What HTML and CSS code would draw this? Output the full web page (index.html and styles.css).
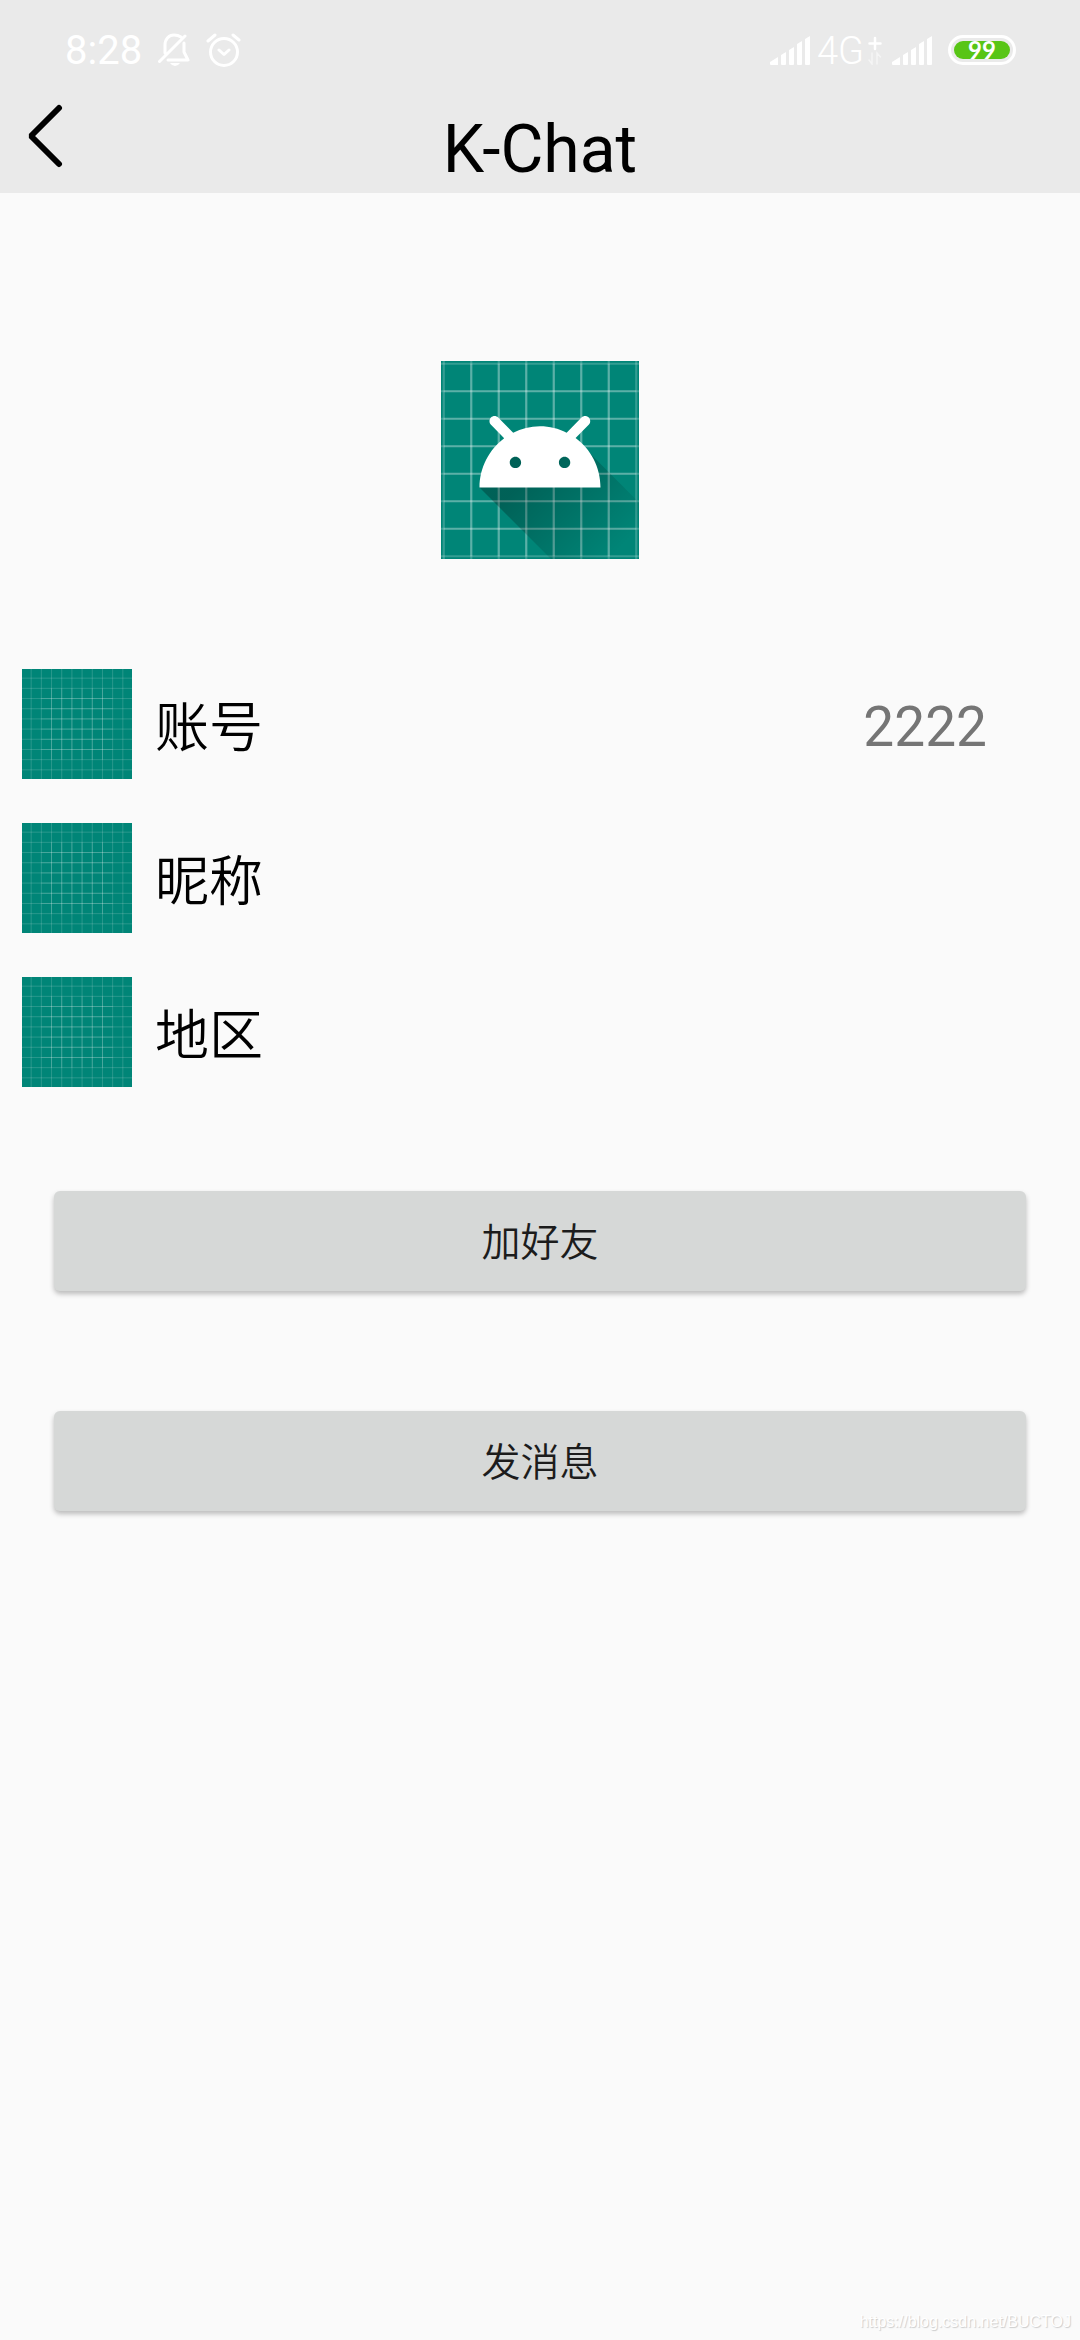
FILE: index.html
```html
<!DOCTYPE html>
<html lang="zh-CN">
<head>
<meta charset="utf-8">
<meta name="viewport" content="width=device-width, initial-scale=1">
<title>K-Chat</title>
<link rel="stylesheet" href="styles.css">
</head>
<body>
<svg class="defs" aria-hidden="true">
  <defs>
    <linearGradient id="shade" gradientUnits="userSpaceOnUse" x1="48.77" y1="61.09" x2="78.59" y2="90.92">
      <stop offset="0" stop-color="#000" stop-opacity=".267"/>
      <stop offset="1" stop-color="#000" stop-opacity="0"/>
    </linearGradient>
    <symbol id="grid" viewBox="0 0 108 108">
      <path fill="#008577" d="M0 0h108v108H0z"/>
      <path fill="none" stroke="#fff" stroke-opacity=".2" stroke-width=".8" d="M9 0v108M19 0v108M29 0v108M39 0v108M49 0v108M59 0v108M69 0v108M79 0v108M89 0v108M99 0v108"/>
      <path fill="none" stroke="#fff" stroke-opacity=".2" stroke-width=".8" d="M0 9h108M0 19h108M0 29h108M0 39h108M0 49h108M0 59h108M0 69h108M0 79h108M0 89h108M0 99h108"/>
      <path fill="none" stroke="#fff" stroke-opacity=".2" stroke-width=".8" d="M19 29h70M19 39h70M19 49h70M19 59h70M19 69h70M19 79h70"/>
      <path fill="none" stroke="#fff" stroke-opacity=".2" stroke-width=".8" d="M29 19v70M39 19v70M49 19v70M59 19v70M69 19v70M79 19v70"/>
    </symbol>
    <symbol id="signal" viewBox="0 0 40 29">
      <path fill="#fff" d="M0 28V26L8 21V29H1Q0 29 0 28ZM11 19L16 16V28Q16 29 15 29H12Q11 29 11 28ZM19 14L24 11V28Q24 29 23 29H20Q19 29 19 28ZM27 8L32 5V28Q32 29 31 29H28Q27 29 27 28ZM35 3L40 0V28Q40 29 39 29H36Q35 29 35 28Z"/>
    </symbol>
  </defs>
</svg>
<header class="header">
  <div class="status">
    <span class="time">8:28</span>
    <svg class="bell" viewBox="0 0 32 34" fill="none" stroke="#fff" stroke-width="3" stroke-linecap="round" stroke-linejoin="round">
      <path d="M7 20V12C7 6 11 2 16 2Q20 2 23 4M26 10V19L30 27H10M1.500 28.500 27 3"/>
      <path fill="#fff" stroke="none" d="M12 30H22Q20 33 17 33T12 30Z"/>
    </svg>
    <svg class="alarm" viewBox="0 0 35 34" fill="none" stroke="#fff" stroke-width="3" stroke-linecap="round" stroke-linejoin="round">
      <circle cx="18" cy="19" r="13.500"/>
      <path d="M13 17 18 21.500 23 17M2 8 9 2M27 2 33 7"/>
    </svg>
    <span class="spacer"></span>
    <svg class="signal"><use href="#signal"/></svg>
    <span class="network">4G</span>
    <svg class="data" viewBox="0 0 14 29" fill="none" stroke="#fff" stroke-linecap="round">
      <path stroke-width="2.500" d="M7 2V13M1.500 7.500H12.500"/>
      <path opacity=".5" stroke-width="1.500" d="M4 17V28L1 24M9 28V17L12.500 21"/>
    </svg>
    <svg class="signal"><use href="#signal"/></svg>
    <span class="battery"><span class="level">99</span></span>
  </div>
  <div class="titlebar">
    <button class="back" aria-label="返回">
      <svg class="chevron" viewBox="0 0 36 64"><path d="M32 4 4 32 32 60" fill="none" stroke="#000" stroke-width="6" stroke-linecap="round" stroke-linejoin="bevel"/></svg>
    </button>
    <h1 class="title">K-Chat</h1>
  </div>
</header>
<main class="profile">
  <svg class="avatar" viewBox="18 18 72 72" role="img" aria-label="头像">
    <use href="#grid" width="108" height="108"/>
    <path fill="url(#shade)" d="M32 64C32 64 38.390 52.990 44.130 50.950C51.370 48.370 70.140 49.570 70.140 49.570L108.260 87.690L108 109.010L75.970 107.970Z"/>
    <path fill="#fff" fill-rule="evenodd" d="M66.940 46.020C72.440 50.070 76 56.610 76 64L32 64C32 56.610 35.560 50.110 40.980 46.060L36.180 41.190C35.450 40.450 35.450 39.300 36.180 38.560C36.910 37.810 38.050 37.810 38.780 38.560L44.250 44.050C47.180 42.570 50.480 41.710 54 41.710C57.480 41.710 60.780 42.570 63.680 44.050L69.110 38.560C69.840 37.810 70.980 37.810 71.710 38.560C72.440 39.300 72.440 40.450 71.710 41.190ZM62.940 56.920C64.080 56.920 65 56.010 65 54.880C65 53.760 64.080 52.850 62.940 52.850C61.800 52.850 60.880 53.760 60.880 54.880C60.880 56.010 61.800 56.920 62.940 56.920ZM45.060 56.920C46.200 56.920 47.130 56.010 47.130 54.880C47.130 53.760 46.200 52.850 45.060 52.850C43.920 52.850 43 53.760 43 54.880C43 56.010 43.920 56.920 45.060 56.920Z"/>
  </svg>
  <dl class="fields">
    <div class="field">
      <svg class="thumb"><use href="#grid"/></svg>
      <dt class="label">账号</dt>
      <dd class="value">2222</dd>
    </div>
    <div class="field">
      <svg class="thumb"><use href="#grid"/></svg>
      <dt class="label">昵称</dt>
      <dd class="value"></dd>
    </div>
    <div class="field">
      <svg class="thumb"><use href="#grid"/></svg>
      <dt class="label">地区</dt>
      <dd class="value"></dd>
    </div>
  </dl>
  <div class="actions">
    <button class="action">加好友</button>
    <button class="action">发消息</button>
  </div>
</main>
<footer class="source">https://blog.csdn.net/BUCTOJ</footer>
</body>
</html>
```
FILE: styles.css
```css
* {
  box-sizing: border-box;
}

body {
  display: flex;
  flex-direction: column;
  min-height: 100vh;
  margin: 0;
  background: #fafafa;
  color: #000;
  font-family: Roboto, "Noto Sans CJK SC", sans-serif;
}

.defs {
  position: absolute;
  width: 0;
  height: 0;
}

.header {
  background: #eaeaea;
}

.status {
  display: flex;
  align-items: center;
  height: 100px;
  padding: 0 64px 0 65px;
  color: #fff;
}

.time {
  padding-top: 2px;
  font-size: 40px;
  line-height: 48px;
}

.bell {
  width: 32px;
  height: 34px;
  margin-left: 16px;
}

.alarm {
  width: 35px;
  height: 34px;
  margin-left: 16px;
}

.spacer {
  flex: 1;
}

.signal {
  width: 40px;
  height: 29px;
}

.network {
  padding-top: 2px;
  margin-left: 7px;
  font-size: 38px;
  font-weight: 300;
  line-height: 48px;
}

.data {
  width: 14px;
  height: 29px;
  margin: 0 10px 0 4px;
}

.battery {
  width: 68px;
  height: 30px;
  margin-left: 16px;
  padding: 3px;
  border: 3px solid #fff;
  border-radius: 15px;
}

.level {
  display: block;
  border-radius: 9px;
  background: #58c516;
  font-family: Lato, sans-serif;
  font-size: 24px;
  font-weight: 700;
  line-height: 18px;
  text-align: center;
}

.titlebar {
  display: grid;
  grid-template-columns: 88px 1fr 88px;
  height: 93px;
}

.back {
  display: flex;
  padding: 4px 0 0 27px;
  border: 0;
  background: none;
}

.chevron {
  width: 36px;
  height: 64px;
}

.title {
  margin: 11px 0 0;
  font-size: 66px;
  font-weight: 400;
  line-height: 78px;
  text-align: center;
}

.profile {
  flex: 1;
}

.avatar {
  display: block;
  width: 198px;
  height: 198px;
  margin: 168px auto 110px;
}

.fields {
  display: grid;
  gap: 44px;
  margin: 0;
  padding: 0 93px 0 22px;
}

.field {
  display: flex;
  align-items: center;
  height: 110px;
}

.thumb {
  width: 110px;
  height: 110px;
}

.label {
  flex: 1;
  padding: 10px 0 0 23px;
  font-size: 54px;
  font-weight: 350;
  line-height: 80px;
}

.value {
  margin: 0;
  padding-top: 6px;
  color: #757575;
  font-size: 55px;
  line-height: 64px;
}

.actions {
  display: grid;
  gap: 120px;
  padding: 104px 54px;
}

.action {
  height: 100px;
  padding: 0 0 4px;
  border: 0;
  border-radius: 6px;
  background: #d6d8d7;
  box-shadow: 0 3px 5px rgb(0 0 0 / 25%);
  color: #1c1c1c;
  font-family: inherit;
  font-size: 39px;
  font-weight: 350;
}

.source {
  padding: 0 9px 8px;
  color: #fff;
  font-family: "Liberation Sans", sans-serif;
  font-size: 16px;
  line-height: 20px;
  text-align: right;
  text-shadow: 1px 1px 1px #ccc;
}
```
